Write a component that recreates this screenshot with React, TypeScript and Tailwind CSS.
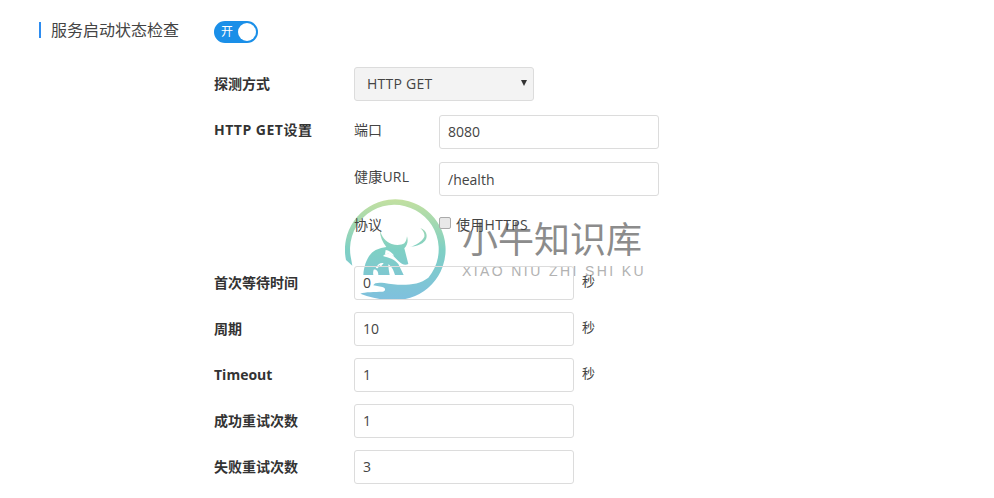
const Label = ({ children, w = "w-[140px]" }: { children: React.ReactNode; w?: string }) => (
  <div className={`${w} shrink-0 pb-[2px] text-[14px] font-bold text-[#333]`}>{children}</div>
);

const Field = ({ value, width = "w-[220px]", low }: { value: string; width?: string; low?: boolean }) => (
  <div className={`${width} h-[34px] rounded-[3px] border border-[#dcdcdc] pl-[8px] ${low ? "pt-[1px]" : "pb-[1px]"} flex items-center text-[14px] text-[#444]`}>{value}</div>
);

const NumRow = ({ label, value, unit }: { label: string; value: string; unit?: boolean }) => (
  <div className="flex items-center h-[34px]">
    <Label>{label}</Label>
    <Field value={value} />
    {unit && <span className="ml-[8px] -mt-[3px] text-[13px] text-[#444]">秒</span>}
  </div>
);

function Logo() {
  return (
    <svg width="110" height="110" viewBox="0 0 330 330" fill="none">
      <defs>
        <linearGradient id="g" gradientUnits="userSpaceOnUse" x1="0" y1="13" x2="0" y2="315">
          <stop offset="0" stopColor="#c3e0a0" />
          <stop offset="0.5" stopColor="#7fd0c4" />
          <stop offset="1" stopColor="#7fc0de" />
        </linearGradient>
      </defs>
      <path
        fill="url(#g)"
        d="M3 195A151 151 0 1 1 150 315L130 315C100 313 70 305 46 296C60 290 90 291 112 290C122 289 124 279 112 276L85 271C87 263 100 262 118 264C160 272 215 275 250 248A133 133 0 1 0 18 190L22 212Z"
      />
      <path
        fill="url(#g)"
        d="M105 103C108 125 122 140 140 147C155 152 170 150 178 145C183 140 185 132 186 124C190 138 188 150 178 160L190 207C180 212 170 208 160 198L140 178C130 174 120 176 114 183C130 188 150 193 160 207L176 240H150C146 228 142 216 130 208C130 218 132 230 134 240H100C100 230 95 222 86 224C84 230 84 235 85 240H55C57 210 68 178 92 165C103 160 114 158 124 156C112 140 104 122 105 103Z"
      />
      <path fill="#fff" d="M92 219C98 208 108 202 116 205L108 214L102 210L99 220Z" />
      <path fill="#fff" d="M122 165C132 166 140 172 148 182L130 176L120 178Z" />
      <path fill="url(#g)" d="M195 156C210 152 232 140 238 125C240 116 234 106 226 100C240 104 248 116 244 130C238 146 218 154 195 156Z" />
    </svg>
  );
}

export default function App() {
  return (
    <div
      className="relative w-[994px] h-[498px] overflow-hidden bg-white text-[#444]"
      style={{ fontFamily: '"Open Sans","Noto Sans CJK SC",sans-serif' }}
    >
      <div className="absolute left-[345px] top-[195px] pointer-events-none">
        <Logo />
      </div>
      <div className="absolute left-[462px] top-[215px] pointer-events-none text-[#808080] opacity-90">
        <div className="text-[36px] leading-[50px]">小牛知识库</div>
        <div className="text-[14px] leading-[14px] mt-[-1px] tracking-[2.4px] text-[#aaa] whitespace-nowrap" style={{ fontFamily: '"Liberation Sans",sans-serif' }}>XIAO NIU ZHI SHI KU</div>
      </div>

      <div className="relative">
        <div className="flex pt-[21px] pl-[39px]">
          <div className="w-[175px] h-[22px] flex items-start">
            <div className="mt-[1px] h-[16px] w-[2px] bg-[#2d8cf0]" />
            <div className="ml-[10px] -mt-[2px] text-[16px] leading-[22px] text-[#444]">服务启动状态检查</div>
          </div>
          <div className="relative w-[44px] h-[22px] rounded-full bg-[#1a8fe8] flex items-center pl-[7px] text-[12px] text-white">
            开
            <div className="absolute right-[2px] top-[2px] w-[18px] h-[18px] rounded-full bg-white" />
          </div>
        </div>

        <div className="mt-[24px] ml-[214px]">
          <div className="flex items-center h-[34px]">
            <Label>探测方式</Label>
            <div className="relative w-[180px] h-[34px] rounded-[3px] border border-[#dcdcdc] bg-[#f3f3f3] pl-[12px] pb-[1px] flex items-center text-[14px] tracking-[0.25px] text-[#444]">
              HTTP GET
              <span className="absolute right-[6px] top-[12px] w-0 h-0 border-l-[3px] border-r-[3px] border-t-[6px] border-l-transparent border-r-transparent border-t-[#333]" />
            </div>
          </div>

          <div className="mt-[14px] flex">
            <Label><span className="block mt-[4px] tracking-[0.5px]">HTTP GET设置</span></Label>
            <div className="flex flex-col">
              <div className="flex">
                <div className="w-[85px] pt-[4px] text-[14px] text-[#444]">端口</div>
                <Field value="8080" />
              </div>
              <div className="flex mt-[13px]">
                <div className="w-[85px] pt-[4px] text-[14px] tracking-[0.2px] text-[#444]">健康URL</div>
                <Field value="/health" low />
              </div>
              <div className="flex items-center mt-[18px] h-[20px]">
                <div className="w-[85px] text-[14px] text-[#444]">协议</div>
                <div className="w-[12px] h-[12px] -mt-[3px] rounded-[2px] border border-[#aaa] bg-[#e8e8e8]" />
                <span className="ml-[5px] text-[14px] tracking-[0.3px] text-[#444]">使用HTTPS</span>
              </div>
            </div>
          </div>

          <div className="mt-[32px] flex flex-col gap-[12px]">
            <NumRow label="首次等待时间" value="0" unit />
            <NumRow label="周期" value="10" unit />
            <NumRow label="Timeout" value="1" unit />
            <NumRow label="成功重试次数" value="1" />
            <NumRow label="失败重试次数" value="3" />
          </div>
        </div>
      </div>
    </div>
  );
}
